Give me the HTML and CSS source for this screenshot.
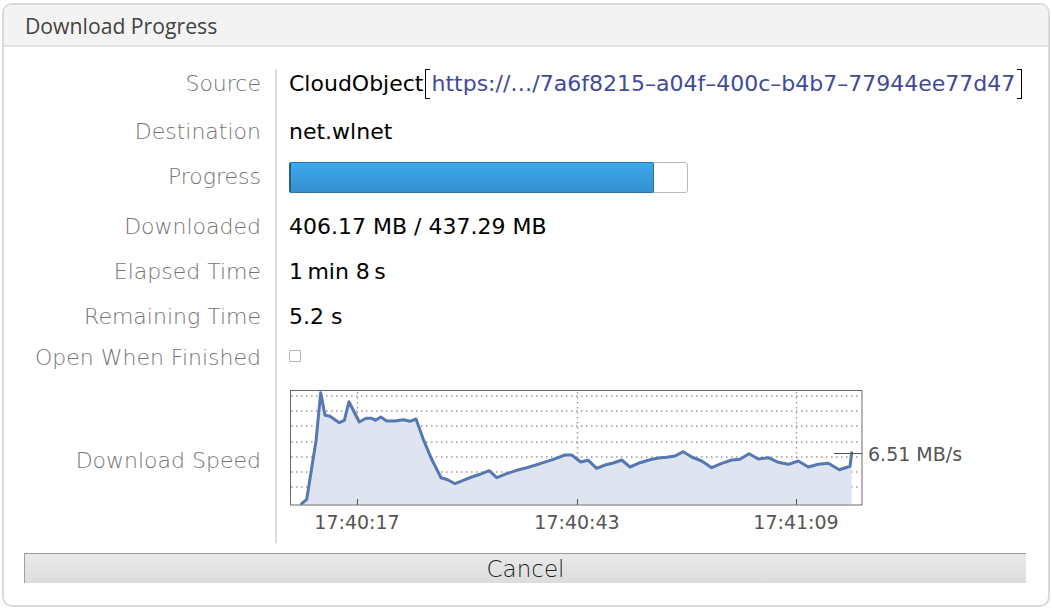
FILE: index.html
```html
<!DOCTYPE html>
<html>
<head>
<meta charset="utf-8">
<link rel="stylesheet" href="styles.css">
</head>
<body>
<div class="panel">
  <div class="titlebar">Download Progress</div>
  <div class="fields">
    <div class="label r1">Source</div>
    <div class="value r1"><span>CloudObject</span><span class="brk brk-l"></span><span class="link">https://…/7a6f8215–a04f–400c–b4b7–77944ee77d47</span><span class="brk brk-r"></span></div>

    <div class="label r2">Destination</div>
    <div class="value r2">net.wlnet</div>

    <div class="label r3">Progress</div>
    <div class="value r3"><div class="track"><div class="fill" style="width: 92%"></div></div></div>

    <div class="label r4">Downloaded</div>
    <div class="value r4">406.17 MB / 437.29 MB</div>

    <div class="label r5">Elapsed Time</div>
    <div class="value r5">1&#8201;min 8&#8201;s</div>

    <div class="label r6">Remaining Time</div>
    <div class="value r6">5.2 s</div>

    <div class="label r7">Open When Finished</div>
    <div class="value r7"><span class="check"></span></div>

    <div class="label r8">Download Speed</div>
    <div class="value r8">
      <svg class="chart" width="690" height="150" viewBox="289 389 690 150">
        <g class="grid">
          <line x1="291" y1="395" x2="861" y2="395"/>
          <line x1="291" y1="410" x2="861" y2="410"/>
          <line x1="291" y1="425" x2="861" y2="425"/>
          <line x1="291" y1="441" x2="861" y2="441"/>
          <line x1="291" y1="456" x2="861" y2="456"/>
          <line x1="291" y1="471" x2="861" y2="471"/>
          <line x1="291" y1="486" x2="861" y2="486"/>
          <line x1="357.5" y1="391" x2="357.5" y2="503"/>
          <line x1="577.5" y1="391" x2="577.5" y2="503"/>
          <line x1="796.5" y1="391" x2="796.5" y2="503"/>
        </g>
        <polygon class="area" points="301.7,503.5 301.7,502.7 306.7,498.3 316,440 320.7,391.7 325,414.3 330,415.3 339.3,421.7 344.3,419.3 349,400.7 359.3,421 366,417.3 371.7,417.3 375.7,419.3 380.7,416 386.7,420 395,420 403.3,418.7 410,420.3 416,418 423.3,438.3 431.7,458.3 441,476.7 447.7,478.7 455,482.7 463.3,479.3 471.7,476 480,473.3 489.3,469.7 496.7,476.7 506.7,472.7 516.7,469.3 526.7,466.7 540,462.7 553.3,458.3 565,454 571.7,454 580.7,461 588.3,459.3 596.7,467.3 605,464 613.3,462 621.7,459 630,466 640,461.7 650,458.7 658.3,457 666.7,456.3 675,455 683.3,450.7 691.7,456 701.7,460 711.7,466.7 721.7,462.3 731.7,459 740,458.3 749,452.7 758.3,458 768.3,456.7 778.3,461.3 788.3,463.3 798.3,460 808.3,466 818.3,463.3 828.3,462.3 839.3,468.7 850,465.3 851.7,451.7 851.7,503.5"/>
        <polyline class="line" points="301.7,502.7 306.7,498.3 316,440 320.7,391.7 325,414.3 330,415.3 339.3,421.7 344.3,419.3 349,400.7 359.3,421 366,417.3 371.7,417.3 375.7,419.3 380.7,416 386.7,420 395,420 403.3,418.7 410,420.3 416,418 423.3,438.3 431.7,458.3 441,476.7 447.7,478.7 455,482.7 463.3,479.3 471.7,476 480,473.3 489.3,469.7 496.7,476.7 506.7,472.7 516.7,469.3 526.7,466.7 540,462.7 553.3,458.3 565,454 571.7,454 580.7,461 588.3,459.3 596.7,467.3 605,464 613.3,462 621.7,459 630,466 640,461.7 650,458.7 658.3,457 666.7,456.3 675,455 683.3,450.7 691.7,456 701.7,460 711.7,466.7 721.7,462.3 731.7,459 740,458.3 749,452.7 758.3,458 768.3,456.7 778.3,461.3 788.3,463.3 798.3,460 808.3,466 818.3,463.3 828.3,462.3 839.3,468.7 850,465.3 851.7,451.7"/>
        <rect class="frame" x="290.5" y="389.5" width="571.5" height="114.5"/>
        <g class="ticks">
          <line x1="357.5" y1="498" x2="357.5" y2="504"/>
          <line x1="577.5" y1="498" x2="577.5" y2="504"/>
          <line x1="796.5" y1="498" x2="796.5" y2="504"/>
          <line x1="834" y1="452.5" x2="862" y2="452.5"/>
        </g>
        <g class="axis-text">
          <text x="357" y="528" text-anchor="middle">17:40:17</text>
          <text x="577" y="528" text-anchor="middle">17:40:43</text>
          <text x="796" y="528" text-anchor="middle">17:41:09</text>
          <text x="868" y="460">6.51 MB/s</text>
        </g>
      </svg>
    </div>
  </div>
  <div class="actions">
    <div class="button">Cancel</div>
  </div>
</div>
</body>
</html>
```

FILE: styles.css
```css
html, body {
  margin: 0;
  padding: 0;
  background: #ffffff;
}

body {
  width: 1052px;
  height: 610px;
  overflow: hidden;
}

.panel {
  margin: 3px 2px 0 2px;
  width: 1048px;
  height: 604px;
  box-sizing: border-box;
  border: 2px solid #dadada;
  border-radius: 10px;
  overflow: hidden;
  background: #ffffff;
}

.titlebar {
  height: 42px;
  box-sizing: border-box;
  padding-left: 21px;
  display: flex;
  align-items: center;
  background: #f3f3f3;
  border-bottom: 2px solid #e2e2e2;
  font-family: "Open Sans", "Noto Sans", sans-serif;
  font-size: 21.2px;
  color: #444444;
}

.fields {
  display: grid;
  grid-template-columns: 271px 1fr;
  margin-top: 22px;
  font-family: "DejaVu Sans", sans-serif;
  font-size: 22px;
}

.label {
  display: flex;
  align-items: center;
  justify-content: flex-end;
  padding-right: 14px;
  color: #747474;
  font-weight: 200;
  white-space: nowrap;
}

.value {
  display: flex;
  align-items: center;
  border-left: 2px solid #dedede;
  padding-left: 12px;
  color: #000000;
  white-space: nowrap;
}

.r1 { height: 26px; padding-top: 1px; }
.r2 { height: 31px; padding-top: 20px; }
.r3 { height: 34px; padding-top: 12px; }
.r4 { height: 30px; padding-top: 18px; }
.r5 { height: 30px; padding-top: 15px; }
.r6 { height: 30px; padding-top: 15px; }
.r7 { height: 30px; padding-top: 11px; }
.r8 { height: 150px; padding-top: 18px; padding-bottom: 3px; }

.label.r8 {
  height: 140px;
  padding-bottom: 13px;
}

.value.r8 {
  align-items: flex-start;
}

.brk {
  display: inline-block;
  width: 5px;
  height: 30px;
  box-sizing: border-box;
  border-top: 1.5px solid #000;
  border-bottom: 1.5px solid #000;
  position: relative;
  top: 1px;
}

.brk-l {
  border-left: 1.8px solid #000;
  margin: 0 2px 0 1px;
}

.brk-r {
  border-right: 1.8px solid #000;
  margin-left: 2px;
}

.link {
  color: #3f4a9a;
}

.track {
  width: 399px;
  height: 31px;
  box-sizing: border-box;
  border: 1px solid #b8b8b8;
  border-radius: 3px;
  background: #ffffff;
  margin-top: 3px;
  display: flex;
}

.fill {
  box-sizing: border-box;
  margin: -1px 0 -1px -1px;
  height: 31px;
  border: 1px solid #2c72ad;
  border-left: 2px solid #215e93;
  border-radius: 2px;
  background: linear-gradient(#3ca9ec, #3490d0);
}

.check {
  display: inline-block;
  width: 12px;
  height: 12px;
  box-sizing: border-box;
  border: 1px solid #b4b4b4;
  border-radius: 1px;
  margin-top: -2px;
}

.chart {
  display: block;
}

.grid line {
  stroke: #9a9a9a;
  stroke-width: 1.4;
  stroke-dasharray: 1.5 3.5;
}

.area {
  fill: #dfe5f0;
}

.line {
  fill: none;
  stroke: #5678b2;
  stroke-width: 3;
  stroke-linejoin: round;
  stroke-linecap: round;
}

.frame {
  fill: none;
  stroke: #6a6a6a;
  stroke-width: 1;
}

.ticks line {
  stroke: #555555;
  stroke-width: 1;
}

.axis-text text {
  font-family: "DejaVu Sans", sans-serif;
  font-size: 19px;
  fill: #555555;
}

.actions {
  padding: 10px 22px 0 20px;
}

.button {
  height: 30px;
  box-sizing: border-box;
  border-top: 1px solid #999999;
  border-left: 1px solid #a0a0a0;
  background: linear-gradient(#eaeaea, #dcdcdc);
  display: flex;
  align-items: center;
  justify-content: center;
  font-family: "DejaVu Sans", sans-serif;
  font-weight: 200;
  font-size: 23px;
  color: #222222;
}
```
